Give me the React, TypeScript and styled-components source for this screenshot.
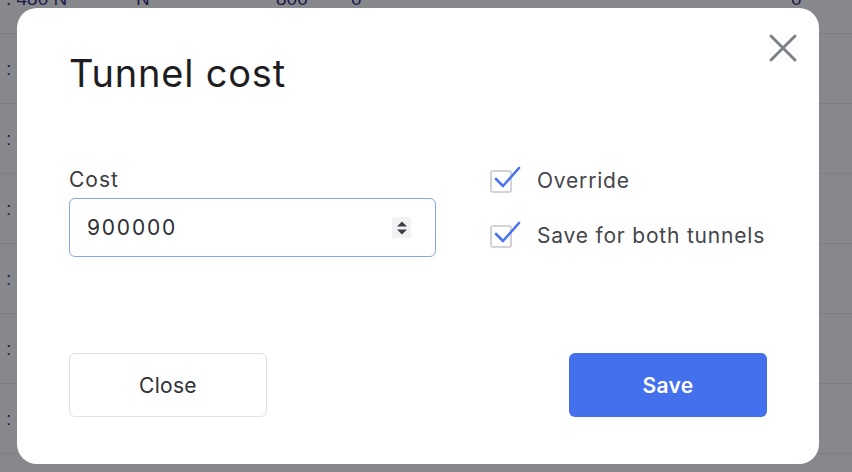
import React from 'react';
import styled, { createGlobalStyle } from 'styled-components';

const GlobalStyle = createGlobalStyle`
	html, body {
		margin: 0;
		padding: 0;
		width: 852px;
		height: 472px;
		overflow: hidden;
		font-family: Inter, 'Noto Sans', sans-serif;
	}
`;

const Page = styled.div`
	position: relative;
	width: 852px;
	height: 472px;
	background: #ffffff;
	overflow: hidden;
`;

const Table = styled.div`
	display: flex;
	flex-direction: column;
	margin-top: -36px;
`;

const Row = styled.div`
	height: 69px;
	border-bottom: 1px solid #ebebee;
	display: grid;
	grid-template-columns: 130px 140px 75px 440px 67px;
	align-items: center;
	font-family: 'Liberation Sans', Arial, sans-serif;
	font-size: 19px;
	color: #2b1f7a;
`;

const Cell = styled.div`
	padding-left: 6px;
`;

const Backdrop = styled.div`
	position: absolute;
	inset: 0;
	background: rgba(15, 17, 25, 0.5);
	display: flex;
	align-items: flex-start;
	padding: 8px 0 0 17px;
	box-sizing: border-box;
`;

const Modal = styled.div`
	position: relative;
	width: 802px;
	height: 456px;
	background: #ffffff;
	border-radius: 20px;
	box-sizing: border-box;
	padding: 42px 52px 0 52px;
	display: flex;
	flex-direction: column;
`;

const CloseIcon = styled.button`
	position: absolute;
	top: 23px;
	right: 19px;
	width: 34px;
	height: 34px;
	border: none;
	background: transparent;
	padding: 0;
	display: flex;
	align-items: center;
	justify-content: center;
	cursor: pointer;
`;

const Title = styled.h2`
	margin: 0;
	font-size: 38px;
	font-weight: 400;
	color: #1e1e22;
	line-height: 46px;
	letter-spacing: 0.8px;
`;

const Body = styled.div`
	display: flex;
	margin-top: 72px;
	height: 185px;
`;

const Field = styled.div`
	width: 367px;
	display: flex;
	flex-direction: column;
`;

const Label = styled.label`
	font-size: 21px;
	color: #3a3a40;
	line-height: 24px;
	letter-spacing: 1px;
	margin-bottom: 6px;
`;

const InputBox = styled.div`
	height: 59px;
	border: 1.5px solid #86a5f3;
	border-radius: 6px;
	box-sizing: border-box;
	display: flex;
	align-items: center;
	padding: 0 24px 0 17px;
`;

const Input = styled.input`
	flex: 1;
	min-width: 0;
	border: none;
	outline: none;
	font-family: inherit;
	font-size: 21px;
	color: #2e2e33;
	background: transparent;
	padding: 0;
	letter-spacing: 1.8px;
`;

const Spinner = styled.div`
	width: 19px;
	height: 21px;
	background: #f4f1f4;
	display: flex;
	align-items: center;
	justify-content: center;
`;

const Options = styled.div`
	margin-left: 54px;
	display: flex;
	flex-direction: column;
	gap: 31px;
	padding-top: 1px;
`;

const Option = styled.label`
	display: flex;
	align-items: center;
	gap: 25px;
	font-size: 21px;
	color: #45454b;
	line-height: 24px;
	letter-spacing: 0.8px;
`;

const Box = styled.span`
	position: relative;
	width: 22px;
	height: 23px;
	border: 2px solid #d2d2d8;
	border-radius: 3px;
	box-sizing: border-box;
	flex-shrink: 0;
`;

const Tick = styled.svg`
	position: absolute;
	left: 1px;
	top: -7px;
`;

const Footer = styled.div`
	display: flex;
	justify-content: space-between;
	width: 698px;
`;

const Button = styled.button<{ $primary?: boolean }>`
	width: 198px;
	height: 64px;
	border-radius: 6px;
	font-family: inherit;
	font-size: 21px;
	letter-spacing: 0.3px;
	cursor: pointer;
	border: ${(p) => (p.$primary ? 'none' : '1.5px solid #e0e0e7')};
	background: ${(p) => (p.$primary ? '#4470ee' : '#ffffff')};
	color: ${(p) => (p.$primary ? '#ffffff' : '#2f2f35')};
	font-weight: ${(p) => (p.$primary ? 600 : 400)};
`;

const rows = [
	['. 480 N', 'N', '800', '0', '0'],
	[':', '', '', '', ''],
	[':', '', '', '', ''],
	[':', '', '', '', ''],
	[':', '', '', '', ''],
	[':', '', '', '', ''],
	[':', '', '', '', ''],
	[':', '', '', '', ''],
];

const Checkbox = ({ children }: { children: React.ReactNode }) => (
	<Option>
		<Box>
			<Tick width="30" height="28" viewBox="0 0 30 28">
				<path d="M3 14 L10 21 L26 3" fill="none" stroke="#4a73f0" strokeWidth="2.6" strokeLinecap="round" strokeLinejoin="round" />
			</Tick>
		</Box>
		{children}
	</Option>
);

const App = () => {
	return (
		<Page>
			<GlobalStyle />
			<Table>
				{rows.map((r, i) => (
					<Row key={i}>
						{r.map((c, j) => (
							<Cell key={j}>{c}</Cell>
						))}
					</Row>
				))}
			</Table>
			<Backdrop>
				<Modal>
					<CloseIcon aria-label="Close">
						<svg width="30" height="30" viewBox="0 0 30 30">
							<path d="M3 3 L27 27 M27 3 L3 27" stroke="#7d8089" strokeWidth="3" strokeLinecap="round" />
						</svg>
					</CloseIcon>
					<Title>Tunnel cost</Title>
					<Body>
						<Field>
							<Label>Cost</Label>
							<InputBox>
								<Input defaultValue="900000" />
								<Spinner>
									<svg width="12" height="16" viewBox="0 0 12 16">
										<path d="M6 1.5 L11 6.5 L1 6.5 Z M1 9.5 L11 9.5 L6 14.5 Z" fill="#3d3d42" />
									</svg>
								</Spinner>
							</InputBox>
						</Field>
						<Options>
							<Checkbox>Override</Checkbox>
							<Checkbox>Save for both tunnels</Checkbox>
						</Options>
					</Body>
					<Footer>
						<Button>Close</Button>
						<Button $primary>Save</Button>
					</Footer>
				</Modal>
			</Backdrop>
		</Page>
	);
};

export default App;
